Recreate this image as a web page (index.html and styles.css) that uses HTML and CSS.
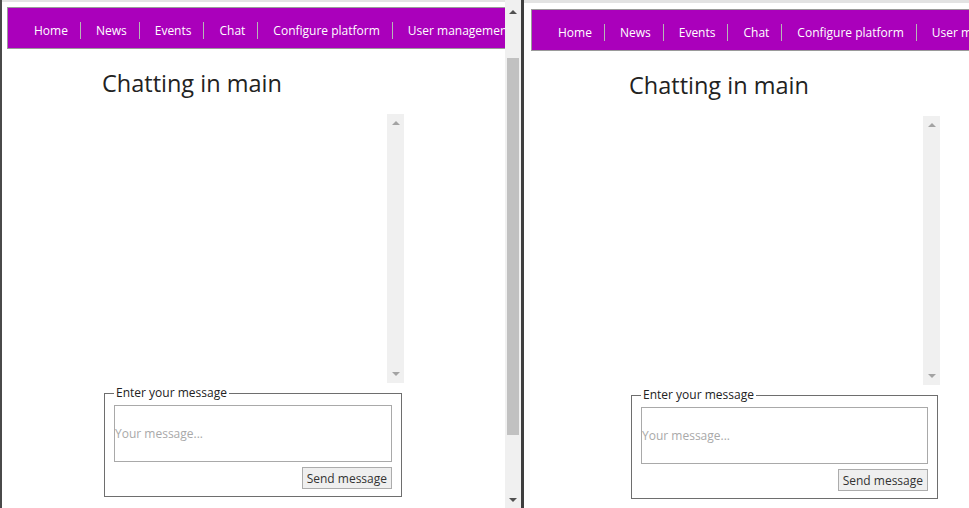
FILE: index.html
```html
<!DOCTYPE html>
<html lang="en">
<head>
<meta charset="utf-8">
<title>Chatting in main</title>
<link rel="stylesheet" href="styles.css">
</head>
<body>
<div class="screen">
  <div class="win win--left">
    <div class="view view--left">
      <nav class="nav">
        <a class="nav__item" href="#">Home</a>
        <a class="nav__item" href="#">News</a>
        <a class="nav__item" href="#">Events</a>
        <a class="nav__item" href="#">Chat</a>
        <a class="nav__item" href="#">Configure platform</a>
        <a class="nav__item" href="#">User management</a>
      </nav>
      <main class="col">
        <h1 class="title">Chatting in main</h1>
        <div class="chat">
          <div class="chat__log"></div>
          <div class="chat__bar"><span class="arrow arrow--up"></span><span class="arrow arrow--down"></span></div>
        </div>
        <fieldset class="compose">
          <legend class="compose__legend">Enter your message</legend>
          <input class="compose__input" type="text" placeholder="Your message...">
          <div class="compose__actions"><button class="compose__send" type="button">Send message</button></div>
        </fieldset>
      </main>
    </div>
    <div class="pscroll">
      <div class="pscroll__btn"><span class="arrow arrow--up arrow--dark"></span></div>
      <div class="pscroll__thumb"></div>
      <div class="pscroll__btn pscroll__btn--down"><span class="arrow arrow--down arrow--dark"></span></div>
    </div>
  </div>
  <div class="divider"></div>
  <div class="win win--right">
    <div class="view view--right">
      <nav class="nav">
        <a class="nav__item" href="#">Home</a>
        <a class="nav__item" href="#">News</a>
        <a class="nav__item" href="#">Events</a>
        <a class="nav__item" href="#">Chat</a>
        <a class="nav__item" href="#">Configure platform</a>
        <a class="nav__item" href="#">User management</a>
      </nav>
      <main class="col">
        <h1 class="title">Chatting in main</h1>
        <div class="chat">
          <div class="chat__log"></div>
          <div class="chat__bar"><span class="arrow arrow--up"></span><span class="arrow arrow--down"></span></div>
        </div>
        <fieldset class="compose">
          <legend class="compose__legend">Enter your message</legend>
          <input class="compose__input" type="text" placeholder="Your message...">
          <div class="compose__actions"><button class="compose__send" type="button">Send message</button></div>
        </fieldset>
      </main>
    </div>
  </div>
</div>
</body>
</html>
```
FILE: styles.css
```css
html, body {
  margin: 0;
  padding: 0;
  background: #fff;
  font-family: "Open Sans", "Noto Sans", sans-serif;
}

.screen {
  display: flex;
  width: 969px;
  height: 508px;
  overflow: hidden;
}

.win {
  display: flex;
  height: 508px;
  overflow: hidden;
  flex: none;
}

.win--left {
  width: 519px;
  border-left: 2px solid #4a4a4a;
}

.win--right {
  flex: 1;
  min-width: 0;
}

.divider {
  flex: none;
  width: 3px;
  background: #3f3f3f;
}

.view {
  flex: 1;
  min-width: 0;
  overflow: hidden;
  background: #fff;
}

.view--left { border-top: 2px solid #e3e3e3; }
.view--right { border-top: 3px solid #e3e3e3; }

/* navigation bar */
.nav {
  display: flex;
  width: max-content;
  background: #aa00bb;
  border: 1px solid #9a9a9a;
  padding: 14px 60px 9px 11px;
}

.view--left .nav { margin: 5px 0 0 5px; }
.view--right .nav { margin: 6px 0 0 7px; }

.nav__item {
  color: #fff;
  font-size: 12px;
  line-height: 17px;
  padding: 0 12px 0 15px;
  white-space: nowrap;
  text-decoration: none;
}

.nav__item + .nav__item { border-left: 1px solid #b6b6b6; }

/* main column */
.col {
  width: 302px;
  margin-left: 100px;
}

.view--right .col {
  width: 311px;
  margin-left: 105px;
}

.title {
  margin: 18px 0 15px;
  font-size: 23.5px;
  line-height: 32px;
  font-weight: 400;
  color: #222;
}

.chat {
  display: flex;
  height: 269px;
  margin-bottom: 2px;
}

.chat__log {
  flex: 1;
  background: #fff;
}

.chat__bar {
  width: 17px;
  background: #f0f0f0;
  display: flex;
  flex-direction: column;
  justify-content: space-between;
  align-items: center;
  padding: 7px 0;
  box-sizing: border-box;
}

.arrow {
  display: block;
  width: 0;
  height: 0;
  border-left: 4px solid transparent;
  border-right: 4px solid transparent;
}

.arrow--up { border-bottom: 4px solid #a3a3a3; }
.arrow--down { border-top: 4px solid #a3a3a3; }
.arrow--up.arrow--dark { border-bottom-color: #505050; }
.arrow--down.arrow--dark { border-top-color: #505050; }

/* compose form */
.compose {
  margin: 0 2px;
  border: 1px solid #6e6e6e;
  padding: 4px 9px 7px;
}

.compose__legend {
  padding: 0 2px;
  font-size: 12px;
  line-height: 16px;
  color: #222;
}

.compose__input {
  display: block;
  width: 100%;
  box-sizing: border-box;
  height: 57px;
  margin: 0;
  border: 1px solid #a9a9a9;
  padding: 0;
  font-family: "Open Sans", "Noto Sans", sans-serif;
  font-size: 12px;
  color: #222;
  background: #fff;
  outline: none;
}

.compose__input::placeholder { color: #a9a9a9; }

.compose__actions {
  display: flex;
  justify-content: flex-end;
  margin-top: 5px;
}

.compose__send {
  height: 22px;
  margin: 0;
  padding: 0 4px;
  border: 1px solid #acacac;
  border-radius: 0;
  background: #efefef;
  font-family: "Open Sans", "Noto Sans", sans-serif;
  font-size: 12px;
  color: #333;
}

/* page scrollbar */
.pscroll {
  flex: none;
  width: 16px;
  background: #f0f0f0;
  display: flex;
  flex-direction: column;
  align-items: center;
  padding-top: 3px;
  box-sizing: border-box;
}

.pscroll__btn {
  width: 16px;
  height: 17px;
  display: flex;
  align-items: center;
  justify-content: center;
}

.pscroll__btn--down { margin-top: auto; }

.pscroll__thumb {
  width: 12px;
  height: 377px;
  margin-top: 38px;
  background: #c1c1c1;
}
```
